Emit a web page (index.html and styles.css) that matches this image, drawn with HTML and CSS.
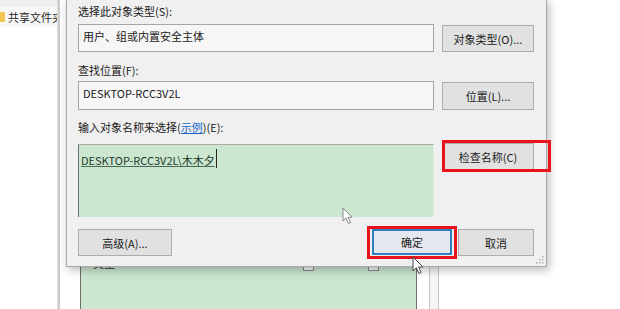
FILE: index.html
```html
<!DOCTYPE html>
<html lang="zh-CN">
<head>
<meta charset="utf-8">
<title>选择用户或组</title>
<link rel="stylesheet" href="styles.css">
</head>
<body>
<div class="stage">
  <div class="left-panel">
    <div class="left-top"></div>
    <div class="folder-row">
      <span class="folder-icon"></span>
      <span class="folder-name">共享文件夹</span>
    </div>
  </div>
  <div class="left-divider"></div>

  <div class="bgwin">
    <div class="bg-list">
      <div class="bg-list-head">
        <span class="bg-col">类型</span>
        <span class="bg-check bg-check-a"></span>
        <span class="bg-check bg-check-b"></span>
      </div>
    </div>
    <div class="bg-scroll"></div>
  </div>

  <div class="dialog">
    <div class="grid">
      <div class="label label-1">选择此对象类型(S):</div>
      <div></div>
      <div class="field field-1">用户、组或内置安全主体</div>
      <div class="btn btn-side">对象类型(O)...</div>

      <div class="label label-2">查找位置(F):</div>
      <div></div>
      <div class="field field-2">DESKTOP-RCC3V2L</div>
      <div class="btn btn-side btn-side-2">位置(L)...</div>

      <div class="label label-3">输入对象名称来选择(<span class="link">示例</span>)(E):</div>
      <div></div>
      <div class="names">
        <span class="name-text">DESKTOP-RCC3V2L\木木夕</span><span class="caret"></span>
      </div>
      <div class="btn btn-check">检查名称(C)</div>
    </div>
    <div class="footer">
      <div class="btn btn-adv">高级(A)...</div>
      <div class="footer-right">
        <div class="btn btn-ok">确定</div>
        <div class="btn btn-cancel">取消</div>
      </div>
    </div>
    <svg class="grip" width="9" height="9" viewBox="0 0 9 9">
      <rect x="7" y="1" width="1.5" height="1.5" fill="#b0b0b0"/>
      <rect x="4" y="4" width="1.5" height="1.5" fill="#b0b0b0"/>
      <rect x="7" y="4" width="1.5" height="1.5" fill="#b0b0b0"/>
      <rect x="1" y="7" width="1.5" height="1.5" fill="#b0b0b0"/>
      <rect x="4" y="7" width="1.5" height="1.5" fill="#b0b0b0"/>
      <rect x="7" y="7" width="1.5" height="1.5" fill="#b0b0b0"/>
    </svg>
  </div>

  <div class="mark mark-check"></div>
  <div class="mark mark-ok"></div>

  <svg class="cursor cursor-1" width="12" height="18" viewBox="0 0 12 18">
    <path d="M1 1 L1 14 L4 11 L6.5 16.5 L8.5 15.6 L6 10.3 L10 10.3 Z" fill="#ffffff" stroke="#8a8a8a" stroke-width="1" stroke-linejoin="round"/>
  </svg>
  <svg class="cursor cursor-2" width="13" height="19" viewBox="0 0 13 19">
    <path d="M1 1 L1 15 L4.3 11.8 L7 17.5 L9.2 16.5 L6.6 11 L11 11 Z" fill="#ffffff" stroke="#444444" stroke-width="1" stroke-linejoin="round"/>
  </svg>
</div>
</body>
</html>
```

FILE: styles.css
```css
html, body {
  margin: 0;
  padding: 0;
  background: #ffffff;
}

.stage {
  position: relative;
  width: 620px;
  height: 309px;
  overflow: hidden;
  background: #ffffff;
  font-family: "Noto Sans CJK SC", "Noto Sans", sans-serif;
  font-size: 11px;
  color: #1a1a1a;
  display: flex;
}

.left-panel {
  width: 57px;
  display: flex;
  flex-direction: column;
  background: #ffffff;
  overflow: hidden;
}

.left-top {
  height: 7px;
  background: #efefef;
}

.folder-row {
  height: 20px;
  display: flex;
  align-items: center;
  gap: 3px;
  white-space: nowrap;
  background: #f7f7f7;
}

.folder-icon {
  width: 5px;
  height: 10px;
  background: #f2c450;
  border-radius: 0 1px 1px 0;
  flex: none;
}

.folder-name {
  font-size: 11px;
  color: #2a2a2a;
}

.left-divider {
  width: 3px;
  background: #cdcdcd;
  border-left: 1px solid #dedede;
  box-sizing: border-box;
}

/* background window visible below the dialog */
.bgwin {
  position: absolute;
  left: 60px;
  top: 0;
  width: 379px;
  height: 309px;
  display: flex;
  background: #ffffff;
  border-right: 1px solid #c4c4c4;
  box-sizing: border-box;
}

.bg-list {
  margin-left: 20px;
  margin-top: 258px;
  width: 338px;
  height: 60px;
  background: #cce6d0;
  border-left: 1px solid #6f6f6f;
  border-right: 1px solid #6f6f6f;
  box-sizing: border-box;
}

.bg-list-head {
  position: relative;
  height: 14px;
}

.bg-col {
  position: absolute;
  left: 12px;
  top: -3px;
  font-size: 11px;
  color: #333;
}

.bg-check {
  position: absolute;
  top: 3px;
  width: 9px;
  height: 8px;
  border: 1px solid #8a8a8a;
  background: #f4f4f4;
}

.bg-check-a { left: 222px; }
.bg-check-b { left: 287px; }

.bg-scroll {
  margin-left: 12px;
  width: 8px;
  border-left: 1px solid #c4c4c4;
  background: #f6f6f6;
}

/* main dialog */
.dialog {
  position: absolute;
  left: 66px;
  top: -1px;
  width: 481px;
  height: 268px;
  box-sizing: border-box;
  background: #f0f0f0;
  border: 1px solid #a9a9a9;
  box-shadow: 2px 3px 9px rgba(0, 0, 0, 0.28);
  padding: 1px 12px 0 11px;
}

.grid {
  display: grid;
  grid-template-columns: 356px 92px;
  column-gap: 8px;
  align-items: start;
}

.label {
  height: 16px;
  line-height: 16px;
  white-space: nowrap;
}

.label-1 { margin-top: 2px; margin-bottom: 5px; }
.label-2 { margin-top: 10px; margin-bottom: 3px; }
.label-3 { margin-top: 9px; margin-bottom: 9px; }

.link {
  color: #1565c8;
  text-decoration: underline;
}

.field {
  box-sizing: border-box;
  height: 28px;
  background: #f6f6f6;
  border: 1px solid #a6a6a6;
  padding: 3px 0 0 4px;
  line-height: 16px;
  white-space: nowrap;
}

.field-2 {
  height: 29px;
  padding-top: 3px;
}

.btn {
  box-sizing: border-box;
  background: #e1e1e1;
  border: 1px solid #adadad;
  display: flex;
  align-items: center;
  justify-content: center;
  white-space: nowrap;
}

.btn-side {
  height: 27px;
  margin-top: 1px;
}

.btn-side-2 {
  height: 28px;
}

.names {
  box-sizing: border-box;
  height: 73px;
  background: #cce6d0;
  border-top: 1px solid #a9a9a9;
  border-left: 1px solid #6f6f6f;
  border-right: 1px solid #e0ece2;
  padding: 7px 0 0 2px;
  display: flex;
  align-items: flex-start;
  line-height: 16px;
}

.name-text {
  text-decoration: underline;
  text-decoration-color: #4a6a58;
  color: #1d3a2c;
  white-space: nowrap;
}

.caret {
  width: 1px;
  height: 19px;
  margin-top: -3px;
  margin-left: 1px;
  background: #222;
}

.btn-check {
  height: 27px;
  margin-top: -1px;
}

.footer {
  margin-top: 12px;
  display: flex;
  justify-content: space-between;
  width: 456px;
}

.btn-adv {
  width: 94px;
  height: 27px;
}

.footer-right {
  display: flex;
  gap: 6px;
}

.btn-ok {
  width: 80px;
  height: 26px;
  background: #e4e8ee;
  border: 2px solid #2f7fc8;
  margin-left: -4px;
}

.btn-cancel {
  width: 76px;
  height: 27px;
}

.grip {
  position: absolute;
  right: 2px;
  bottom: 2px;
}

/* red annotation boxes */
.mark {
  position: absolute;
  box-sizing: border-box;
  border: 3px solid #e8141b;
}

.mark-check {
  left: 442px;
  top: 140px;
  width: 109px;
  height: 32px;
}

.mark-ok {
  left: 367px;
  top: 226px;
  width: 90px;
  height: 33px;
}

.cursor {
  position: absolute;
}

.cursor-1 {
  left: 342px;
  top: 207px;
}

.cursor-2 {
  left: 412px;
  top: 256px;
}
```
